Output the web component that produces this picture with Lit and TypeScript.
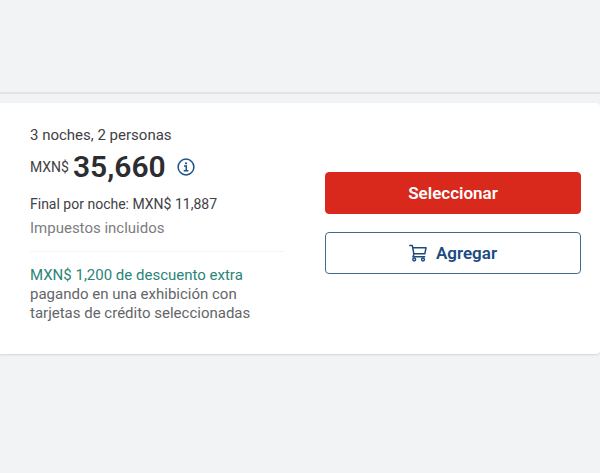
import { LitElement, html, css } from "lit";
import { customElement } from "lit/decorators.js";

@customElement("price-summary")
class PriceSummary extends LitElement {
  static styles = css`
    :host {
      display: block;
      font-size: 15px;
      line-height: 19px;
      color: #3f4144;
    }
    p {
      margin: 0;
    }
    .price {
      display: flex;
      align-items: center;
      height: 36px;
      margin: 4px 0 10px;
    }
    .currency {
      margin-right: 4px;
    }
    .currency,
    .nightly {
      font-size: 14px;
    }
    .amount {
      font-size: 30px;
      line-height: 36px;
      font-weight: 600;
      color: #2b2d30;
    }
    .info {
      display: flex;
      margin: 0 0 0 10px;
      padding: 0;
      border: 0;
      background: none;
      color: #1d5186;
      cursor: pointer;
    }
    .taxes {
      margin-top: 5px;
      color: #7b7d80;
    }
    .promo {
      margin-top: 13px;
      padding-top: 14px;
      border-top: 1px solid #f3f4f5;
      color: #636568;
    }
    .discount {
      display: block;
      color: #2a8478;
    }
  `;

  render() {
    return html`
      <p>3 noches, 2 personas</p>
      <p class="price">
        <span class="currency">MXN$</span>
        <span class="amount">35,660</span>
        <button class="info" type="button" aria-label="Detalle del precio">
          <svg width="20" height="20" viewBox="0 0 20 20" fill="none" stroke="currentColor" aria-hidden="true">
            <circle cx="10" cy="10" r="7.9" stroke-width="1.5" />
            <path d="M8 8.9h2.3v4.6M7.7 13.7h4.7" stroke-width="1.5" />
            <circle cx="10" cy="6.3" r="1.1" fill="currentColor" stroke="none" />
          </svg>
        </button>
      </p>
      <p class="nightly">Final por noche: MXN$ 11,887</p>
      <p class="taxes">Impuestos incluidos</p>
      <p class="promo">
        <span class="discount">MXN$ 1,200 de descuento extra</span>
        pagando en una exhibición con tarjetas de crédito seleccionadas
      </p>
    `;
  }
}

@customElement("app-root")
class AppRoot extends LitElement {
  static styles = css`
    :host {
      display: block;
      min-height: 100vh;
      background: #f2f3f5;
      font-family: Roboto, "Liberation Sans", sans-serif;
    }
    .previous {
      height: 92px;
      border-bottom: 2px solid #e0e2e4;
      margin-bottom: 9px;
      background: #f2f3f5;
    }
    .card {
      display: grid;
      grid-template-columns: 254fr 256fr;
      column-gap: 41px;
      align-items: center;
      padding: 23px 19px 31px 30px;
      background: #fff;
      border-radius: 0 4px 4px 0;
      box-shadow: 0 1px 2px #d3d5d7;
    }
    .actions {
      display: grid;
      gap: 18px;
      margin-top: -4px;
    }
    .button {
      display: flex;
      align-items: center;
      justify-content: center;
      gap: 9px;
      height: 42px;
      padding: 0 16px;
      border: 1px solid #d9281c;
      border-radius: 4px;
      font: 600 17px/20px Roboto, "Liberation Sans", sans-serif;
      cursor: pointer;
    }
    .primary {
      background: #d9281c;
      color: #fff;
    }
    .secondary {
      background: #fff;
      border-color: #416b8d;
      color: #1b4b80;
    }
  `;

  render() {
    return html`
      <div class="previous"></div>
      <main class="card">
        <price-summary></price-summary>
        <div class="actions">
          <button class="button primary" type="button">Seleccionar</button>
          <button class="button secondary" type="button">
            <svg width="18" height="18" viewBox="0 0 18 18" fill="none" stroke="currentColor" stroke-width="1.5" stroke-linejoin="round" stroke-linecap="round" aria-hidden="true">
              <path d="M.8 1.4h2.5l1.6 8.8-.9 2.6h11.6" />
              <path d="M3.7 3.8h13.3l-1.2 6H4.9" />
              <circle cx="5.2" cy="15.5" r="1.4" />
              <circle cx="14" cy="15.5" r="1.4" />
            </svg>
            <span>Agregar</span>
          </button>
        </div>
      </main>
    `;
  }
}
